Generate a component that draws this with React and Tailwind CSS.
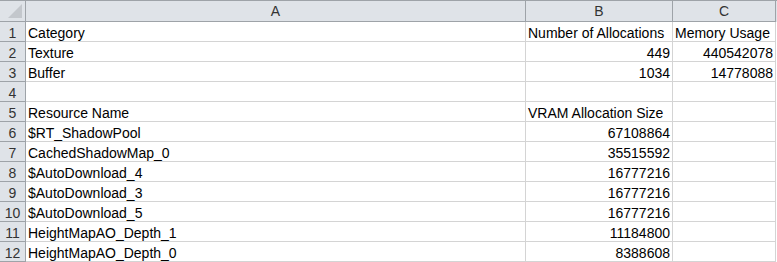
// Excel-style sheet: two small tables on one worksheet
const cols = ['A', 'B', 'C']

const rows = [
  ['Category', 'Number of Allocations', 'Memory Usage'],
  ['Texture', 449, 440542078],
  ['Buffer', 1034, 14778088],
  ['', '', ''],
  ['Resource Name', 'VRAM Allocation Size', ''],
  ['$RT_ShadowPool', 67108864, ''],
  ['CachedShadowMap_0', 35515592, ''],
  ['$AutoDownload_4', 16777216, ''],
  ['$AutoDownload_3', 16777216, ''],
  ['$AutoDownload_5', 16777216, ''],
  ['HeightMapAO_Depth_1', 11184800, ''],
  ['HeightMapAO_Depth_0', 8388608, ''],
]

const grid = 'grid grid-cols-[26px_500px_147px_103px]'

function Cell({ value }) {
  // 숫자는 오른쪽 정렬, 글자는 왼쪽
  const isNum = typeof value === 'number'
  return (
    <div
      className={`h-[20px] border-r border-b border-[#d4d4d4] px-[2px] flex items-end whitespace-nowrap overflow-visible ${
        isNum ? 'justify-end' : 'justify-start'
      }`}
    >
      {value}
    </div>
  )
}

export default function App() {
  return (
    <div className="w-[777px] h-[262px] bg-white overflow-hidden text-[14px] leading-[16px] text-black font-['Liberation_Sans',sans-serif]">
      <div className="border-t border-[#9ea3a8]">
        {/* 열 머리글 */}
        <div className={`${grid} bg-[#dfe3e8] text-[#333]`}>
          <div className="h-[21px] border-r border-b border-[#9ea3a8] relative">
            <div className="absolute right-[3px] bottom-[3px] w-0 h-0 border-l-[14px] border-l-transparent border-b-[14px] border-b-[#c3c7cc]" />
          </div>
          {cols.map((c) => (
            <div
              key={c}
              className="h-[21px] border-r border-b border-[#9ea3a8] flex items-center justify-center"
            >
              {c}
            </div>
          ))}
        </div>

        {/* 데이터 행 */}
        {rows.map((r, i) => (
          <div key={i} className={grid}>
            <div className="h-[20px] bg-[#dfe3e8] text-[#333] border-r border-b border-[#9ea3a8] flex items-end justify-center">
              {i + 1}
            </div>
            {r.map((v, j) => (
              <Cell key={j} value={v} />
            ))}
          </div>
        ))}
      </div>
    </div>
  )
}
